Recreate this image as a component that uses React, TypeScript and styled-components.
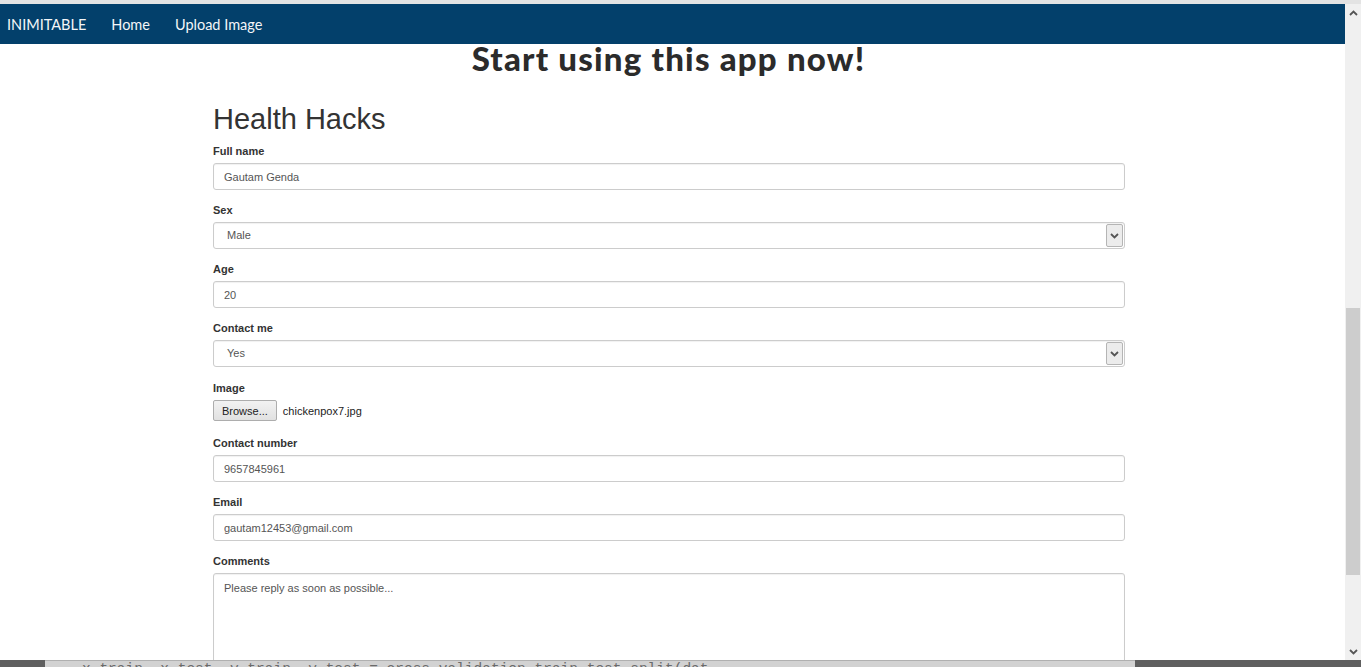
import React, { useState } from "react";
import styled, { createGlobalStyle } from "styled-components";

const GlobalStyle = createGlobalStyle`
  html, body {
    margin: 0;
    padding: 0;
    overflow: hidden;
    background: #ffffff;
  }
  * { box-sizing: border-box; }
`;

// LAYOUT
const Screen = styled.div`
  width: 1361px;
  height: 667px;
  display: flex;
  flex-direction: column;
  overflow: hidden;
`;

const TopEdge = styled.div`
  height: 4px;
  background: #e3e3e3;
  flex-shrink: 0;
`;

const Body = styled.div`
  display: flex;
  flex: 1;
  min-height: 0;
`;

const Page = styled.div`
  flex: 1;
  overflow: hidden;
  font-family: "Liberation Sans", Arial, sans-serif;
`;

// NAVBAR
const Navbar = styled.nav`
  height: 40px;
  background: #03406b;
  display: flex;
  align-items: center;
  padding-left: 7px;
  gap: 25px;
`;

const NavLink = styled.a`
  color: #f4f6f8;
  font-family: "Lato", "Open Sans", sans-serif;
  font-size: 14.5px;
  text-decoration: none;
`;

// HEADINGS
const Banner = styled.h1`
  margin: 0;
  height: 34px;
  line-height: 28px;
  text-align: center;
  font-family: "Lato", sans-serif;
  font-weight: 900;
  font-size: 33px;
  letter-spacing: 1.2px;
  color: #2b2b2b;
  padding-right: 8px;
`;

const Container = styled.div`
  width: 912px;
  margin-left: 213px;
`;

const Title = styled.h2`
  margin: 24px 0 0 0;
  font-weight: 400;
  font-size: 29px;
  line-height: 34px;
  color: #333333;
`;

// FORM
const Field = styled.div<{ $gap?: number }>`
  margin-top: ${(p) => (p.$gap ?? 13)}px;
`;

const Label = styled.label`
  display: block;
  font-size: 11px;
  font-weight: 700;
  color: #333333;
  line-height: 14px;
  margin-bottom: 5px;
`;

const TextInput = styled.input`
  display: block;
  width: 100%;
  height: 27px;
  padding: 0 10px;
  border: 1px solid #cccccc;
  border-radius: 3px;
  font-family: "Liberation Sans", Arial, sans-serif;
  font-size: 11px;
  color: #555555;
  background: #ffffff;
  box-shadow: inset 0 1px 1px rgba(0, 0, 0, 0.06);
  outline: none;
`;

const SelectBox = styled.div`
  display: flex;
  height: 27px;
  border: 1px solid #cccccc;
  border-radius: 3px;
  background: #ffffff;
  box-shadow: inset 0 1px 1px rgba(0, 0, 0, 0.06);
`;

const SelectValue = styled.span`
  flex: 1;
  padding-left: 13px;
  font-size: 11px;
  line-height: 25px;
  color: #555555;
`;

const SelectArrow = styled.span`
  width: 17px;
  margin: 1px 1px 1px 0;
  background: #ececec;
  border: 1px solid #b5b5b5;
  border-radius: 2px;
  display: flex;
  align-items: center;
  justify-content: center;
`;

const FileRow = styled.div`
  display: flex;
  align-items: center;
  gap: 6px;
  margin-top: 1px;
`;

const BrowseButton = styled.button`
  height: 21px;
  padding: 0 8px;
  border: 1px solid #adadad;
  border-radius: 2px;
  background: linear-gradient(#f2f2f2, #e1e1e1);
  font-family: "Liberation Sans", Arial, sans-serif;
  font-size: 11px;
  color: #222222;
`;

const FileName = styled.span`
  font-size: 11px;
  color: #222222;
`;

const TextArea = styled.textarea`
  display: block;
  width: 100%;
  height: 110px;
  padding: 8px 10px;
  border: 1px solid #cccccc;
  border-radius: 3px;
  resize: none;
  font-family: "Liberation Sans", Arial, sans-serif;
  font-size: 11px;
  color: #555555;
  box-shadow: inset 0 1px 1px rgba(0, 0, 0, 0.06);
  outline: none;
`;

// SCROLLBAR
const Scrollbar = styled.div`
  width: 16px;
  background: #f0f0f0;
  display: flex;
  flex-direction: column;
  align-items: center;
  flex-shrink: 0;
`;

const ScrollArrow = styled.div`
  height: 17px;
  width: 16px;
  display: flex;
  align-items: center;
  justify-content: center;
`;

const ScrollTrack = styled.div`
  flex: 1;
  width: 100%;
  display: flex;
  flex-direction: column;
  padding-top: 287px;
`;

const ScrollThumb = styled.div`
  height: 267px;
  margin: 0 1px 0 1px;
  background: #cdcdcd;
`;

// BOTTOM STRIP
const Taskbar = styled.div`
  height: 7px;
  display: flex;
  flex-shrink: 0;
  overflow: hidden;
`;

const DarkPart = styled.div<{ $w: number }>`
  width: ${(p) => p.$w}px;
  background: #5f5f5f;
`;

const EditorPart = styled.div`
  flex: 1;
  background: #d2d2d2;
  border-top: 1px solid #b0b0b0;
  overflow: hidden;
  padding-left: 37px;
  white-space: nowrap;
  font-family: "Liberation Mono", monospace;
  font-size: 14.5px;
  line-height: 16px;
  color: #6a6a6a;
`;

const Chevron = ({ up }: { up?: boolean }) => (
  <svg width="9" height="6" viewBox="0 0 9 6">
    <path
      d={up ? "M1 5 L4.5 1.5 L8 5" : "M1 1 L4.5 4.5 L8 1"}
      stroke="#555"
      strokeWidth="1.8"
      fill="none"
    />
  </svg>
);

const App = () => {
  // STATES
  const [name, setName] = useState("Gautam Genda");
  const [age, setAge] = useState("20");
  const [phone, setPhone] = useState("9657845961");
  const [email, setEmail] = useState("gautam12453@gmail.com");
  const [comments, setComments] = useState("Please reply as soon as possible...");

  return (
    <Screen>
      <GlobalStyle />
      <TopEdge />
      <Body>
        <Page>
          <Navbar>
            <NavLink>INIMITABLE</NavLink>
            <NavLink>Home</NavLink>
            <NavLink>Upload Image</NavLink>
          </Navbar>
          <Banner>Start using this app now!</Banner>
          <Container>
            <Title>Health Hacks</Title>
            <Field $gap={8}>
              <Label>Full name</Label>
              <TextInput value={name} onChange={(e) => setName(e.target.value)} />
            </Field>
            <Field>
              <Label>Sex</Label>
              <SelectBox>
                <SelectValue>Male</SelectValue>
                <SelectArrow>
                  <Chevron />
                </SelectArrow>
              </SelectBox>
            </Field>
            <Field>
              <Label>Age</Label>
              <TextInput value={age} onChange={(e) => setAge(e.target.value)} />
            </Field>
            <Field>
              <Label>Contact me</Label>
              <SelectBox>
                <SelectValue>Yes</SelectValue>
                <SelectArrow>
                  <Chevron />
                </SelectArrow>
              </SelectBox>
            </Field>
            <Field $gap={14}>
              <Label>Image</Label>
              <FileRow>
                <BrowseButton>Browse...</BrowseButton>
                <FileName>chickenpox7.jpg</FileName>
              </FileRow>
            </Field>
            <Field $gap={15}>
              <Label>Contact number</Label>
              <TextInput value={phone} onChange={(e) => setPhone(e.target.value)} />
            </Field>
            <Field>
              <Label>Email</Label>
              <TextInput value={email} onChange={(e) => setEmail(e.target.value)} />
            </Field>
            <Field>
              <Label>Comments</Label>
              <TextArea value={comments} onChange={(e) => setComments(e.target.value)} />
            </Field>
          </Container>
        </Page>
        <Scrollbar>
          <ScrollArrow>
            <Chevron up />
          </ScrollArrow>
          <ScrollTrack>
            <ScrollThumb />
          </ScrollTrack>
          <ScrollArrow>
            <Chevron />
          </ScrollArrow>
        </Scrollbar>
      </Body>
      <Taskbar>
        <DarkPart $w={45} />
        <EditorPart>x_train, x_test, y_train, y_test = cross_validation.train_test_split(dat</EditorPart>
        <DarkPart $w={226} />
      </Taskbar>
    </Screen>
  );
};

export default App;
